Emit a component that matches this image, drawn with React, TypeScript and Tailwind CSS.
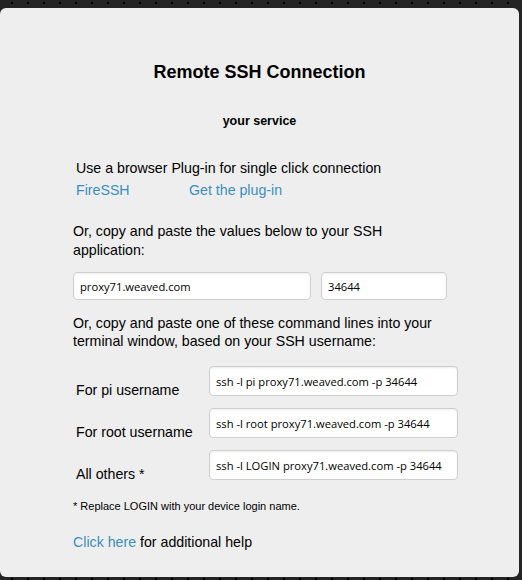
const linkCls = "text-[#3b8ebe] hover:underline";

const inputCls =
  "h-full w-full rounded-[4px] border border-[#cfcfcf] bg-white px-[6px] font-['Open_Sans'] text-[11.2px] text-black shadow-[inset_0_1px_2px_rgba(0,0,0,0.08)] outline-none";

const commands = [
  { label: "For pi username", value: "ssh -l pi proxy71.weaved.com -p 34644" },
  { label: "For root username", value: "ssh -l root proxy71.weaved.com -p 34644" },
  { label: "All others *", value: "ssh -l LOGIN proxy71.weaved.com -p 34644" },
];

export default function App() {
  return (
    <div className="h-[580px] w-[522px] overflow-hidden bg-[#242424] bg-[radial-gradient(circle,#000_1px,transparent_1.5px)] bg-[length:16px_16px] bg-[position:4px_-5px] pt-[8px] font-['Liberation_Sans'] text-black">
      <div className="h-[569px] w-[519px] rounded-[6px] bg-[#eeeeee] pl-[73px] pt-[54px]">
        <h2 className="-ml-[73px] text-center text-[18px] font-bold leading-[20px]">Remote SSH Connection</h2>
        <p className="-ml-[73px] mt-[31px] text-center text-[12.5px] font-bold leading-[16px]">your service</p>

        <div className="ml-[3px] mt-[28px] text-[14.2px] leading-[22px]">
          <p>Use a browser Plug-in for single click connection</p>
          <div className="flex">
            <a href="#" className={`${linkCls} w-[113px]`}>FireSSH</a>
            <a href="#" className={linkCls}>Get the plug-in</a>
          </div>
        </div>

        <p className="mt-[21px] w-[330px] text-[14.2px] leading-[19px]">
          Or, copy and paste the values below to your SSH application:
        </p>

        <div className="mt-[12px] flex h-[28px] gap-[10px]">
          <div className="w-[238px]">
            <input readOnly className={inputCls} value="proxy71.weaved.com" />
          </div>
          <div className="w-[126px]">
            <input readOnly className={inputCls} value="34644" />
          </div>
        </div>

        <p className="mt-[14px] w-[380px] text-[14.2px] leading-[18px]">
          Or, copy and paste one of these command lines into your terminal window, based on your SSH username:
        </p>

        <div className="mt-[16px] flex flex-col gap-[12px]">
          {commands.map((c) => (
            <div key={c.label} className="flex h-[30px]">
              <span className="ml-[3px] w-[133px] pt-[15px] text-[14.2px] leading-[18px]">{c.label}</span>
              <div className="w-[249px]">
                <input readOnly className={inputCls} value={c.value} />
              </div>
            </div>
          ))}
        </div>

        <p className="mt-[19px] text-[11px] leading-[14px]">* Replace LOGIN with your device login name.</p>

        <p className="mt-[20px] text-[14.2px] leading-[18px]">
          <a href="#" className={linkCls}>Click here</a> for additional help
        </p>
      </div>
    </div>
  );
}
